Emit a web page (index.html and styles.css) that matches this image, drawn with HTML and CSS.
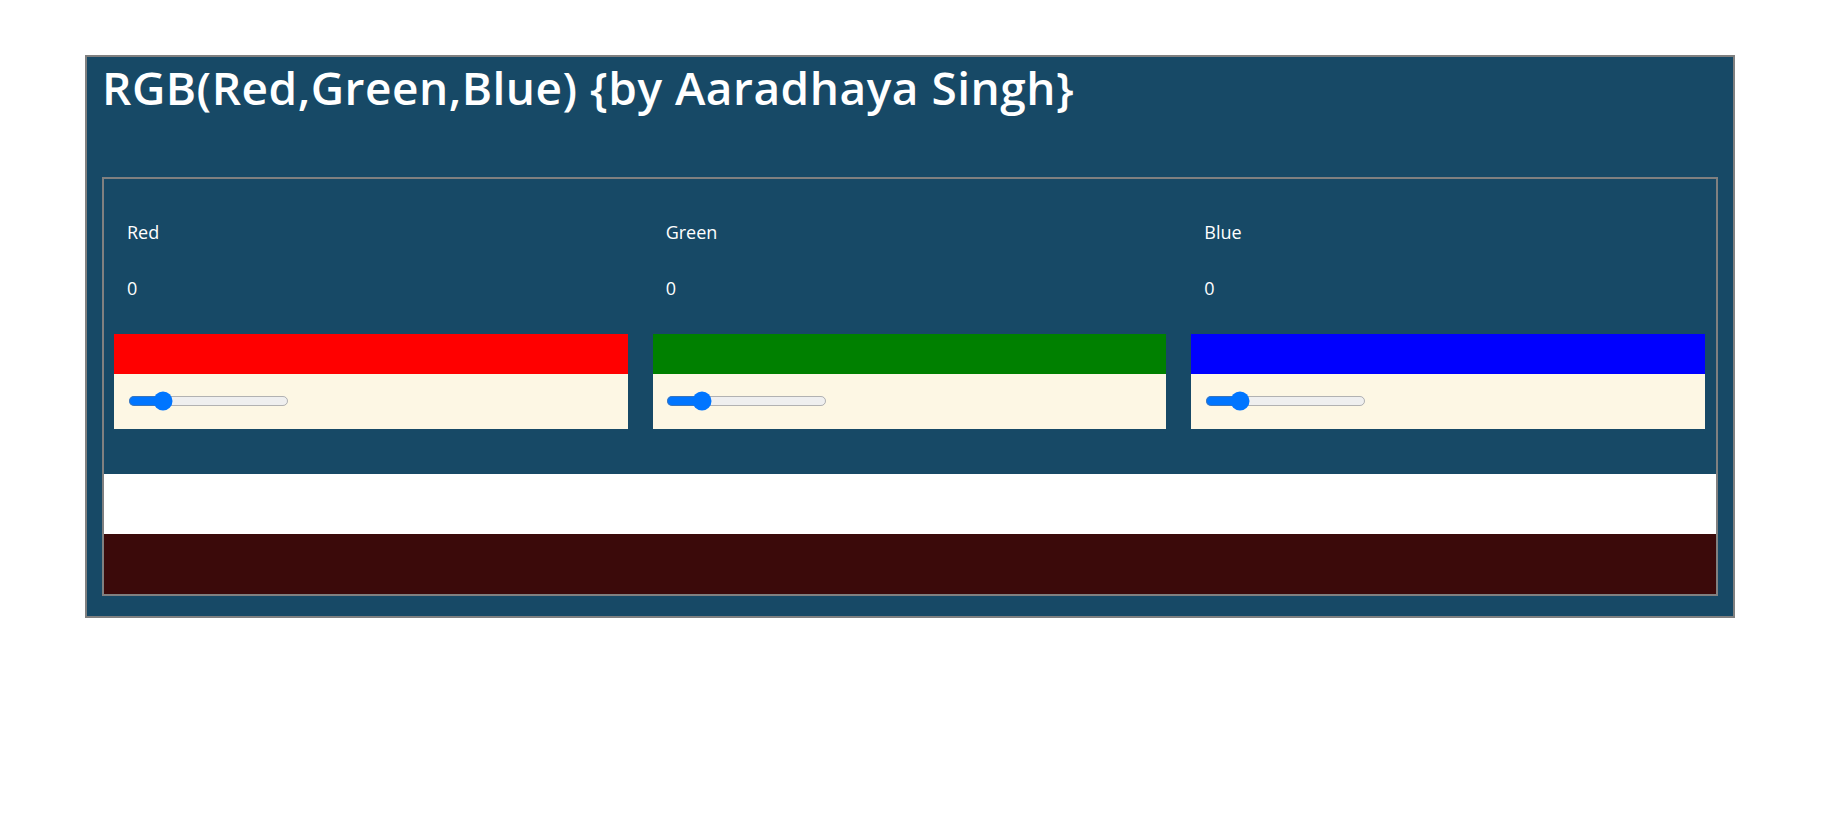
FILE: index.html
```html
<!DOCTYPE html>
<html>
<head>
<meta charset="utf-8">
<title>RGB</title>
<link rel="stylesheet" href="styles.css">
</head>
<body>
<div class="container">
  <h1 class="title">RGB(Red,Green,Blue) {by Aaradhaya Singh}</h1>
  <div class="panel">
    <div class="channels">
      <div class="channel">
        <p class="label">Red</p>
        <p class="value">0</p>
        <div class="swatch red"></div>
        <div class="control"><input class="slider" type="range" min="0" max="100" value="18"></div>
      </div>
      <div class="channel">
        <p class="label">Green</p>
        <p class="value">0</p>
        <div class="swatch green"></div>
        <div class="control"><input class="slider" type="range" min="0" max="100" value="18"></div>
      </div>
      <div class="channel">
        <p class="label">Blue</p>
        <p class="value">0</p>
        <div class="swatch blue"></div>
        <div class="control"><input class="slider" type="range" min="0" max="100" value="18"></div>
      </div>
    </div>
    <div class="band-white"></div>
    <div class="band-result"></div>
  </div>
</div>
</body>
</html>
```
FILE: styles.css
```css
html, body {
  margin: 0;
  padding: 0;
  background: #ffffff;
}

body {
  font-family: "Open Sans", "Noto Sans", sans-serif;
}

.container {
  margin: 55px 0 0 85px;
  width: 1616px;
  padding: 0 15px 20px 15px;
  background: #174966;
  border: 2px solid #808080;
}

.title {
  margin: 0 0 60px 0;
  font-size: 46px;
  font-weight: 600;
  letter-spacing: 0.5px;
  line-height: 60px;
  color: #ffffff;
}

.panel {
  border: 2px solid #808080;
}

.channels {
  display: grid;
  grid-template-columns: 1fr 1fr 1fr;
  column-gap: 25px;
  padding: 0 11px 45px 10px;
}

.channel {
  display: flex;
  flex-direction: column;
}

.label,
.value {
  margin: 0;
  padding-left: 13px;
  font-size: 18px;
  line-height: 24px;
  color: #ffffff;
}

.label {
  margin-top: 41px;
}

.value {
  margin-top: 32px;
}

.swatch {
  margin-top: 34px;
  height: 40px;
}

.red { background: #ff0000; }
.green { background: #008000; }
.blue { background: #0000ff; }

.control {
  box-sizing: border-box;
  height: 55px;
  background: #fdf7e4;
  display: flex;
  align-items: center;
  padding: 0 0 2px 11px;
}

.slider {
  zoom: 1.25;
  width: 129px;
  margin: 2px;
}

.band-white {
  height: 60px;
  background: #ffffff;
}

.band-result {
  height: 60px;
  background: #3b0a0a;
}
```
